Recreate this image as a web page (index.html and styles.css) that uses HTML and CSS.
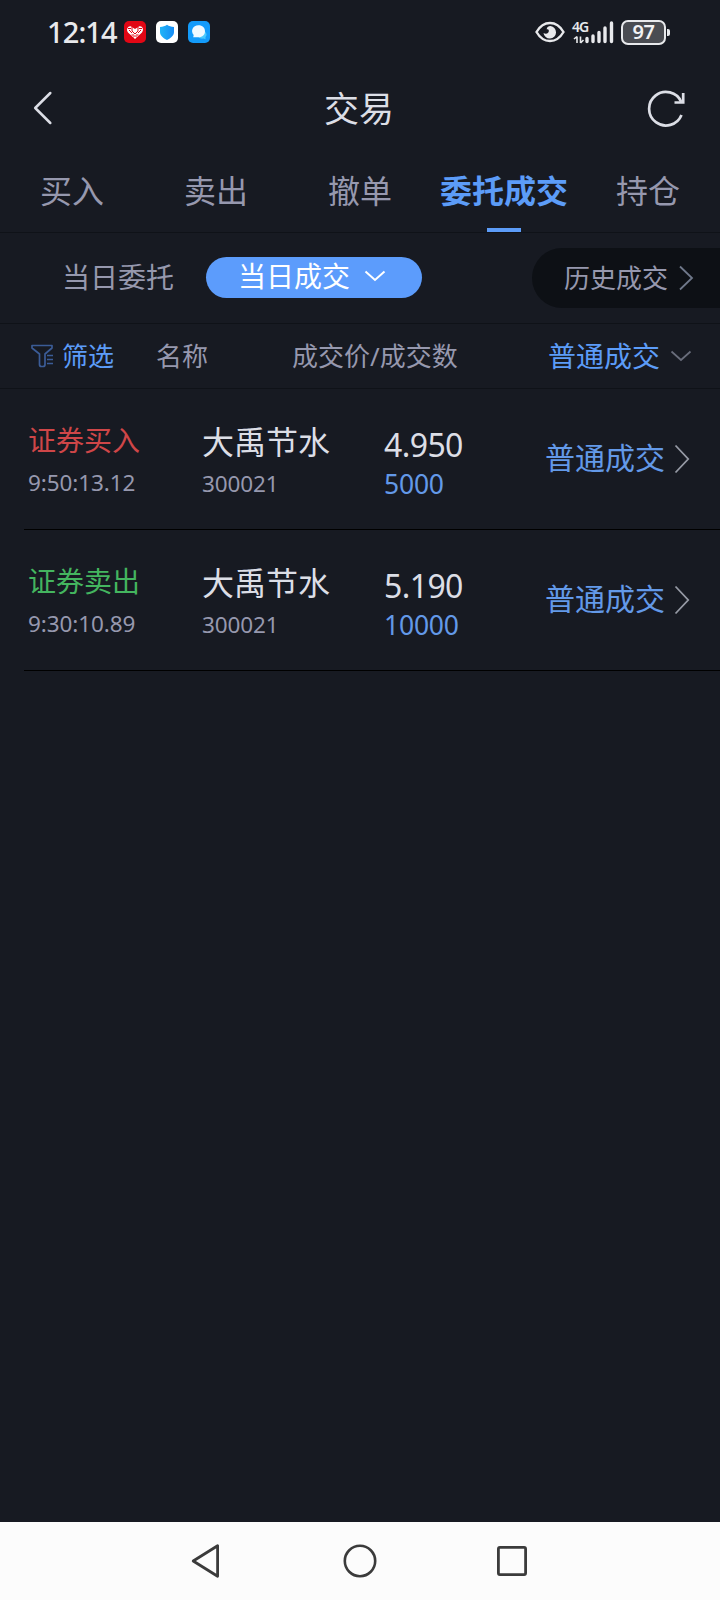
FILE: index.html
```html
<!DOCTYPE html>
<html lang="zh-CN">
<head>
<meta charset="utf-8">
<title>交易</title>
<link rel="stylesheet" href="styles.css">
</head>
<body>
<div class="screen">
  <div class="status">
    <span class="clock">12:14</span>
    <div class="apps">
      <svg width="22" height="22" viewBox="0 0 22 22"><rect width="22" height="22" rx="5" fill="#e20715"/><path d="M11 18 4 11.5C1.500 8 4.500 4.500 7 5.500L11 8l4-2.500c3-1 5.500 2.500 3 6z" fill="#fff"/><path d="M5 9l3 3M8 6v4l3 3 3-3V6M17 9l-3 3M7.500 14H10M12 14h2.500M9 16.500l2-2 2 2M4 7.500h3M15 7.500h3" fill="none" stroke="#e20715" stroke-width="1"/></svg>
      <svg width="22" height="22" viewBox="0 0 22 22"><defs><linearGradient id="sh"><stop stop-color="#20b5f8"/><stop offset="1" stop-color="#168bf4"/></linearGradient></defs><rect width="22" height="22" rx="5" fill="#fff"/><path d="M11 3.700c2 1.500 4 2 7 2.300v5c0 3.500-3 6-7 8-4-2-7-4.500-7-8V6c3-.3 5-.8 7-2.300z" fill="url(#sh)"/></svg>
      <svg width="22" height="22" viewBox="0 0 22 22"><rect width="22" height="22" rx="5" fill="#139bfa"/><path d="M17 10.500c2 2 2 4 .5 5.500v2.300l-2-.8c-2 .5-4-.2-5-1.500z" fill="#49c9ff"/><path d="M10.500 4.200c4 0 6.500 2.500 6.500 6s-2.500 6-6.500 6H5.200l.5-2.200c-3.500-4-1-9.800 4.800-9.800z" fill="#f1faff"/></svg>
    </div>
    <div class="signals">
      <svg width="30" height="22" viewBox="0 0 30 22"><path d="M1.500 11C5 5 9.500 2 15 2s10 3 13.500 9C25 17 20.500 20 15 20S5 17 1.500 11z" fill="none" stroke="#e8e9ec" stroke-width="2.400"/><path d="M15.500 5a6.300 6.300 0 1 1-7 7c2.500 1.800 5.800.3 5.300-2.700-.3-1-1.200-1.300-2-.8-.3-2.300 1.500-3.500 3.700-3.500z" fill="#e8e9ec"/></svg>
      <div class="network">
        <span class="gen">4G</span>
        <svg width="41" height="24" viewBox="0 0 41 24"><path d="M14 18.500v3M20 16v5.500M26 12.500v9M32 8v13.500M38.500 3v18.500" stroke="#e8e9ec" stroke-width="3.400" stroke-linecap="round"/><path d="M4 23V16.500M1 19 4 16.500M7.500 16.500V23M7.500 23l3-3" fill="none" stroke="#e8e9ec" stroke-width="1.600"/></svg>
      </div>
      <div class="battery"><span class="level">97</span><i class="nub"></i></div>
    </div>
  </div>

  <header class="header">
    <svg width="22" height="36" viewBox="0 0 22 36"><path d="M19.300 3 4.200 18l15.100 15" fill="none" stroke="#dcdee6" stroke-width="2.500" stroke-linecap="round" stroke-linejoin="round"/></svg>
    <h1 class="title">交易</h1>
    <svg width="38" height="38" viewBox="0 0 38 38"><path d="M34.300 13A16.800 16.800 0 1 0 34.500 26" fill="none" stroke="#dcdee6" stroke-width="2.700"/><path d="M36.200 4v9.500H27.500" fill="none" stroke="#dcdee6" stroke-width="2.700"/></svg>
  </header>

  <nav class="tabs">
    <span class="tab">买入</span>
    <span class="tab">卖出</span>
    <span class="tab">撤单</span>
    <span class="tab active">委托成交</span>
    <span class="tab">持仓</span>
  </nav>

  <div class="scope">
    <span class="today-orders">当日委托</span>
    <span class="pill">当日成交<svg width="22" height="12" viewBox="0 0 22 12"><path d="M1.500 1.500 11 10l9.500-8.500" fill="none" stroke="#fff" stroke-width="2"/></svg></span>
    <span class="history">历史成交<svg width="16" height="26" viewBox="0 0 16 26"><path d="M2 1.500 14 13 2 24.500" fill="none" stroke="#6f788a" stroke-width="1.800"/></svg></span>
  </div>

  <div class="columns">
    <span class="filter"><svg width="24" height="24" viewBox="0 0 24 24"><path d="M1 1.500h20V4l-7 6v10.500c0 1.200-.8 2-2 2h-1.500c-1.200 0-2-.8-2-2V10L1 4z" fill="none" stroke="#3b5c97" stroke-width="1.700" stroke-linejoin="round"/><path d="M16 11.500h6M16 15.500h6M16 19.500h6" stroke="#3b5c97" stroke-width="1.700"/></svg>筛选</span>
    <span class="col-name">名称</span>
    <span class="col-price">成交价/成交数</span>
    <span class="kind-select">普通成交<svg width="22" height="12" viewBox="0 0 22 12"><path d="M1.500 1.500 11 10l9.500-8.500" fill="none" stroke="#696d7b" stroke-width="1.700"/></svg></span>
  </div>

  <main class="deals">
    <article class="deal">
      <div class="side"><div class="action buy">证券买入</div><div class="meta">9:50:13.12</div></div>
      <div class="stock"><div class="name">大禹节水</div><div class="meta code">300021</div></div>
      <div class="amount"><div class="price">4.950</div><div class="qty">5000</div></div>
      <div class="kind"><span class="kind-label">普通成交</span><svg width="16" height="30" viewBox="0 0 16 30"><path d="M1.500 1.500 14.200 15 1.500 28.500" fill="none" stroke="#969aa5" stroke-width="1.800"/></svg></div>
    </article>
    <article class="deal">
      <div class="side"><div class="action sell">证券卖出</div><div class="meta">9:30:10.89</div></div>
      <div class="stock"><div class="name">大禹节水</div><div class="meta code">300021</div></div>
      <div class="amount"><div class="price">5.190</div><div class="qty">10000</div></div>
      <div class="kind"><span class="kind-label">普通成交</span><svg width="16" height="30" viewBox="0 0 16 30"><path d="M1.500 1.500 14.200 15 1.500 28.500" fill="none" stroke="#969aa5" stroke-width="1.800"/></svg></div>
    </article>
  </main>

  <footer class="navbar">
    <svg width="30" height="36" viewBox="0 0 30 36"><path d="M26.600 2.700v30.600L2.200 18z" fill="none" stroke="#3b3b3b" stroke-width="2.800" stroke-linejoin="round"/></svg>
    <svg width="34" height="34" viewBox="0 0 34 34"><circle cx="17" cy="17" r="15.200" fill="none" stroke="#3b3b3b" stroke-width="2.600"/></svg>
    <svg width="30" height="30" viewBox="0 0 30 30"><rect x="1.400" y="1.400" width="27.200" height="27.200" rx="1.500" fill="none" stroke="#3b3b3b" stroke-width="2.800"/></svg>
  </footer>
</div>
</body>
</html>
```
FILE: styles.css
```css
* { box-sizing: border-box; }
body { margin: 0; background: #171a22; }
svg { display: block; flex: none; }
.screen {
  width: 720px; height: 1600px; display: flex; flex-direction: column;
  overflow: hidden; background: #171a22; color: #dcdee6;
  font-family: "Noto Sans", "Noto Sans CJK SC", sans-serif; white-space: nowrap;
}
.status { height: 64px; display: flex; align-items: center; padding-left: 47px; }
.clock { width: 77px; font-size: 29px; line-height: 40px; font-weight: 500; letter-spacing: -.9px; color: #e8e9ec; }
.apps { display: flex; gap: 10px; }
.signals { margin-left: 325px; display: flex; align-items: center; }
.network { position: relative; margin-left: 8px; }
.gen { position: absolute; left: -1px; top: 0; font-size: 14px; line-height: 14px; font-weight: 600; letter-spacing: -1px; color: #e8e9ec; }
.battery {
  position: relative; margin-left: 7px; width: 45px; height: 25px; border: 2px solid #e8e9ec;
  border-radius: 7px; background: #4a4c52; display: flex; align-items: center; justify-content: center;
}
.level { font-size: 20px; line-height: 20px; font-weight: 600; letter-spacing: -.5px; color: #f2f2f4; }
.nub { position: absolute; right: -6px; top: 7px; width: 3px; height: 7px; border-radius: 0 2px 2px 0; background: #e8e9ec; }

.header { height: 88px; display: flex; align-items: center; justify-content: space-between; padding: 0 35px 0 31px; }
.header .title { margin: 1px 0 0 18px; font-size: 35px; line-height: 50px; font-weight: 400; }

.tabs { height: 81px; display: grid; grid-template-columns: repeat(5, 144px); border-bottom: 1px solid #0f1218; }
.tab { position: relative; height: 80px; line-height: 77px; font-size: 32px; text-align: center; color: #9698ae; }
.tab.active { color: #5c9cf8; font-weight: 700; }
.tab.active::after { content: ""; position: absolute; left: 55px; bottom: 0; width: 34px; height: 4px; background: #5c9cf8; }

.scope { height: 91px; display: flex; align-items: center; border-bottom: 1px solid #0f1218; color: #9698ae; }
.today-orders { width: 206px; padding: 0 0 3px 62px; font-size: 28px; line-height: 40px; }
.pill {
  width: 216px; height: 41px; margin-bottom: 2px; padding: 0 0 2px 32px; border-radius: 21px; background: #5c9cfc; color: #fff;
  display: flex; align-items: center; gap: 14px; font-size: 28px; line-height: 40px;
}
.history {
  margin-left: 110px; width: 188px; height: 60px; padding-left: 32px; border-radius: 30px 0 0 30px; background: #0d1015;
  display: flex; align-items: center; gap: 10px; font-size: 26px; line-height: 40px;
}

.columns {
  height: 65px; display: grid; grid-template-columns: 125px 136px 256px 1fr; align-items: center;
  padding-left: 31px; border-bottom: 1px solid #0f1218; font-size: 26px; line-height: 40px; color: #9698ae;
}
.filter { display: flex; align-items: center; gap: 7px; color: #5c9cf8; }
.kind-select { display: flex; align-items: center; gap: 10px; font-size: 28px; color: #5c9cf8; }

.deals { flex: 1; }
.deal {
  height: 141px; margin-left: 24px; padding: 31px 0 0 4px; border-bottom: 1px solid #000;
  display: grid; grid-template-columns: 174px 182px 161px 1fr;
}
.action { font-size: 28px; line-height: 40px; }
.buy { color: #cf4648; }
.sell { color: #44b55f; }
.meta { margin-top: 7px; font-size: 22.500px; line-height: 32px; letter-spacing: -.1px; color: #9698ae; }
.name { margin-top: -1px; font-size: 32px; line-height: 46px; }
.code { margin-top: 3px; }
.price { margin-top: 2px; font-size: 32px; line-height: 46px; letter-spacing: -.6px; }
.qty { margin-top: -1px; font-size: 26.500px; line-height: 34px; letter-spacing: -.2px; color: #6399e8; }
.kind { display: flex; align-items: center; gap: 9px; height: 78px; font-size: 30px; line-height: 44px; color: #6399e8; }
.kind-label { padding-bottom: 2px; }

.navbar { height: 78px; background: #fcfcfc; display: grid; grid-template-columns: 152px 154px 30px; padding-left: 191px; align-items: center; }
```
